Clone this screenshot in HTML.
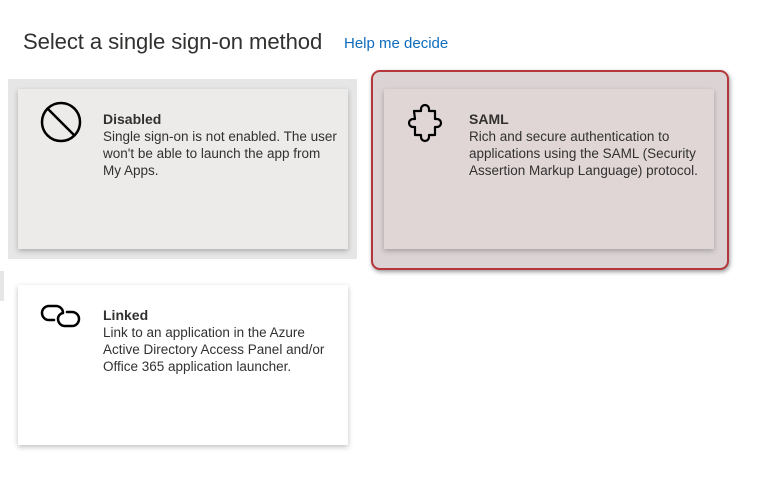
<!DOCTYPE html>
<html><head><meta charset="utf-8"><style>
body{margin:0;width:778px;height:490px;background:#fff;font-family:"Liberation Sans",sans-serif;position:relative;overflow:hidden;color:#323130}
.a{position:absolute}
h1{position:absolute;left:23px;top:29px;margin:0;font-weight:normal;font-size:22.1px;color:#323130;letter-spacing:-0.1px}
.help{left:344px;top:35px;font-size:15px;color:#0f6cbd}
.card{position:absolute;width:330px;height:160px;box-shadow:0 2px 5px rgba(0,0,0,.25)}
.t{position:absolute;left:85px;top:22px;font-size:13.5px;line-height:17px;white-space:nowrap}
.t b{display:block;font-size:14px}
svg{position:absolute}
</style></head><body>
<h1>Select a single sign-on method</h1>
<div class="a help">Help me decide</div>
<div class="a" style="left:8px;top:79px;width:349px;height:180px;background:#e6e6e6"></div>
<div class="card" style="left:18px;top:89px;background:#edebe9">
<svg style="left:22px;top:12px" width="42" height="42" viewBox="0 0 42 42"><circle cx="21" cy="21" r="19" fill="none" stroke="#000" stroke-width="2.5"/><line x1="8" y1="8" x2="34" y2="34" stroke="#000" stroke-width="2.5"/></svg>
<div class="t"><b>Disabled</b>Single sign-on is not enabled. The user<br>won't be able to launch the app from<br>My Apps.</div></div>
<div class="a" style="left:371px;top:70px;width:354px;height:196px;border:2px solid #b5373b;border-radius:9px;background:#dcd4d4;box-shadow:1px 2px 4px rgba(0,0,0,.4)"></div>
<div class="card" style="left:384px;top:89px;background:#e0d6d6">
<svg style="left:22px;top:12px" width="40" height="42" viewBox="0 0 40 42"><path d="M8 10h7v-2a4 4 0 0 1 8 0v2h6v8h2a4 4 0 0 1 0 8h-2v8h-6v2a4 4 0 0 1-8 0v-2h-6v-8h-2a4 4 0 0 1 0-8h2z" fill="none" stroke="#000" stroke-width="2.2" stroke-linejoin="round"/></svg>
<div class="t"><b>SAML</b>Rich and secure authentication to<br>applications using the SAML (Security<br>Assertion Markup Language) protocol.</div></div>
<div class="a" style="left:0;top:271px;width:4px;height:30px;background:#e6e6e6"></div>
<div class="card" style="left:18px;top:285px;background:#fff">
<svg style="left:20px;top:16px" width="46" height="30" viewBox="0 0 46 30"><path d="M16 19h-5a7 7 0 0 1 0-14h7a7 7 0 0 1 7 7" fill="none" stroke="#000" stroke-width="2.5" stroke-linecap="round"/><path d="M29 11h5a7 7 0 0 1 0 14h-7a7 7 0 0 1-7-7" fill="none" stroke="#000" stroke-width="2.5" stroke-linecap="round"/><path d="M20 18a6 6 0 0 1 5-6" fill="none" stroke="#000" stroke-width="2.5"/></svg>
<div class="t"><b>Linked</b>Link to an application in the Azure<br>Active Directory Access Panel and/or<br>Office 365 application launcher.</div></div>
</body></html>
